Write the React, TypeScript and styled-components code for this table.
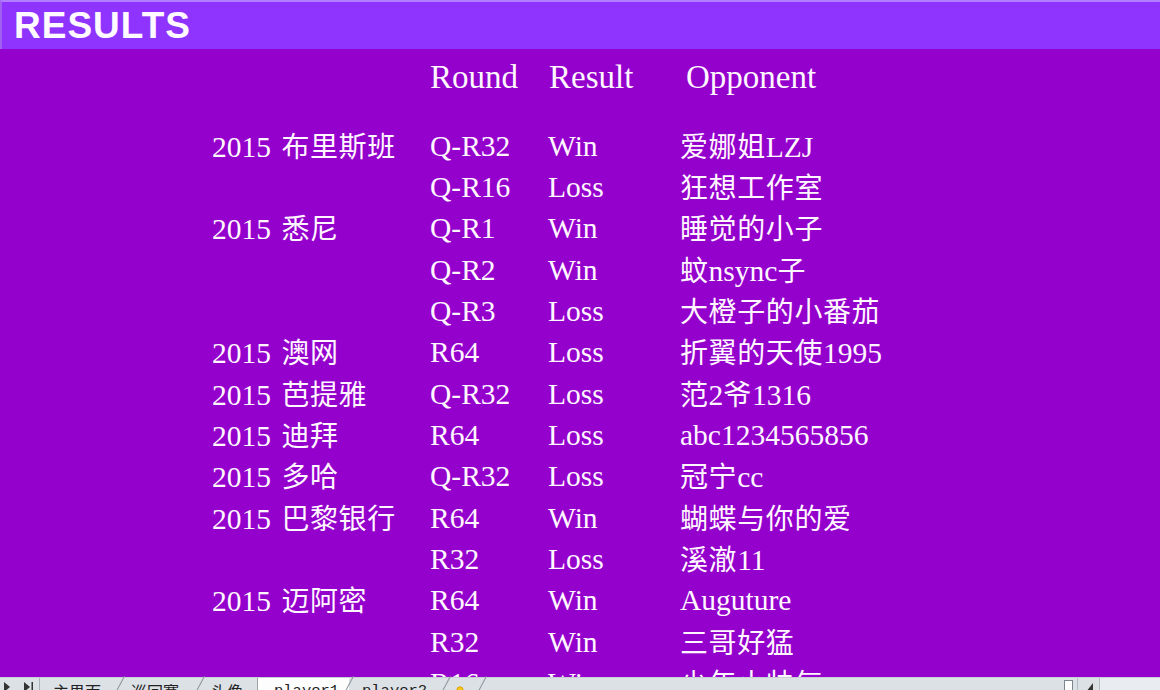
import React from "react";
import styled, { createGlobalStyle } from "styled-components";

const GlobalStyle = createGlobalStyle`
  html, body { margin: 0; padding: 0; overflow: hidden; background: #9400cc; }
  * { box-sizing: border-box; }
`;

const Page = styled.div`
  width: 1160px;
  height: 690px;
  overflow: hidden;
  display: flex;
  flex-direction: column;
`;

const TitleBar = styled.div`
  height: 49px;
  flex: none;
  background: #8f33ff;
  border-top: 2px solid #b27dff;
  border-left: 2px solid #a060f0;
  padding-left: 12px;
  display: flex;
  align-items: center;
  font-family: "Liberation Sans", Arial, sans-serif;
  font-weight: bold;
  font-size: 37px;
  letter-spacing: 1px;
  color: #fffaff;
  line-height: 1;
`;

const Sheet = styled.div`
  height: 628px;
  flex: none;
  overflow: hidden;
  background: #9400cc;
  color: #fff6ff;
  font-family: "Liberation Serif", "Noto Sans CJK SC", serif;
`;

const HeaderRow = styled.div`
  display: grid;
  grid-template-columns: 430px 119px 137px 1fr;
  height: 56px;
  margin-bottom: 20px;
  align-items: center;
  font-size: 33px;
  line-height: 40px;
`;

const Row = styled.div`
  display: grid;
  grid-template-columns: 212px 218px 118px 132px 1fr;
  height: 41.33px;
  align-items: center;
  font-size: 29.5px;
  line-height: 36px;
  white-space: nowrap;
`;

const Cell = styled.div<{ $indent?: number }>`
  padding-left: ${(p) => p.$indent ?? 0}px;
`;

const CjkText = styled.span<{ $gap?: number }>`
  font-family: "Noto Sans CJK SC", sans-serif;
  font-size: 28px;
  letter-spacing: 0.6px;
  margin-left: ${(p) => p.$gap ?? 0}px;
`;

const TabBar = styled.div`
  height: 24px;
  flex: none;
  display: flex;
  align-items: stretch;
  background: #dce1e6;
  border-top: 1px solid #c8ced4;
  position: relative;
`;

const NavBox = styled.div`
  width: 40px;
  display: flex;
  align-items: flex-start;
  padding: 4px 0 0 3px;
  gap: 12px;
  border-right: 1px solid #aab2ba;
`;

const Tabs = styled.div`
  display: flex;
  align-items: stretch;
  padding-left: 8px;
`;

const Tab = styled.div<{ $active?: boolean; $mono?: boolean; $w: number; $pad?: number }>`
  position: relative;
  width: ${(p) => p.$w}px;
  padding-left: ${(p) => p.$pad ?? 5}px;
  padding-top: 3px;
  background: ${(p) => (p.$active ? "#fdfdfd" : "transparent")};
  border-left: ${(p) => (p.$active ? "1px solid #9aa2aa" : "none")};
  font-family: ${(p) =>
    p.$mono ? '"Liberation Mono", monospace' : '"Noto Sans CJK SC", sans-serif'};
  font-size: ${(p) => (p.$mono ? "15.5px" : "16px")};
  color: #222;
  line-height: 20px;
  white-space: nowrap;
`;

const Slant = styled.span`
  width: 6px;
  flex: none;
  position: relative;
  &::before {
    content: "";
    position: absolute;
    left: 4px;
    top: -2px;
    width: 1px;
    height: 30px;
    background: #8c949c;
    transform: rotate(28deg);
    transform-origin: top left;
  }
`;

const RightTools = styled.div`
  margin-left: auto;
  display: flex;
  align-items: stretch;
`;

const Splitter = styled.div`
  width: 9px;
  margin-top: 2px;
  border: 1px solid #7c848c;
  background: #fff;
  border-bottom: none;
  margin-right: 4px;
`;

const ScrollBtn = styled.div`
  width: 23px;
  border-left: 1px solid #b4bcc4;
  border-right: 1px solid #b4bcc4;
  display: flex;
  justify-content: center;
  padding-top: 4px;
`;

const Track = styled.div`
  width: 60px;
  background: #e9edf1;
`;

const Tri = () => (
  <svg width="8" height="10" viewBox="0 0 8 10">
    <path d="M1 0 L7 5 L1 10 Z" fill="#333" />
  </svg>
);

const TriEnd = () => (
  <svg width="11" height="10" viewBox="0 0 11 10">
    <path d="M1 0 L7 5 L1 10 Z" fill="#333" />
    <rect x="8.5" y="0" width="1.5" height="10" fill="#333" />
  </svg>
);

const InsertIcon = () => (
  <svg width="18" height="12" viewBox="0 0 18 12">
    <rect x="3" y="5" width="13" height="9" fill="#fff" stroke="#6a7ea0" />
    <circle cx="6" cy="4" r="3.2" fill="#f5c518" stroke="#d69a00" strokeWidth="0.8" />
  </svg>
);

const LeftTri = () => (
  <svg width="10" height="10" viewBox="0 0 10 10">
    <path d="M9 1 L9 10 L2 10 Z" fill="#333" />
  </svg>
);

type R = { ev?: string; ec?: string; round: string; result: string; opp: React.ReactNode };

const rows: R[] = [
  { ev: "2015 ", ec: "布里斯班", round: "Q-R32", result: "Win", opp: <><CjkText>爱娜姐</CjkText>LZJ</> },
  { round: "Q-R16", result: "Loss", opp: <CjkText>狂想工作室</CjkText> },
  { ev: "2015 ", ec: "悉尼", round: "Q-R1", result: "Win", opp: <CjkText>睡觉的小子</CjkText> },
  { round: "Q-R2", result: "Win", opp: <><CjkText>蚊</CjkText>nsync<CjkText>子</CjkText></> },
  { round: "Q-R3", result: "Loss", opp: <CjkText>大橙子的小番茄</CjkText> },
  { ev: "2015 ", ec: "澳网", round: "R64", result: "Loss", opp: <><CjkText>折翼的天使</CjkText>1995</> },
  { ev: "2015 ", ec: "芭提雅", round: "Q-R32", result: "Loss", opp: <><CjkText>范</CjkText>2<CjkText>爷</CjkText>1316</> },
  { ev: "2015 ", ec: "迪拜", round: "R64", result: "Loss", opp: "abc1234565856" },
  { ev: "2015 ", ec: "多哈", round: "Q-R32", result: "Loss", opp: <><CjkText>冠宁</CjkText>cc</> },
  { ev: "2015 ", ec: "巴黎银行", round: "R64", result: "Win", opp: <CjkText>蝴蝶与你的爱</CjkText> },
  { round: "R32", result: "Loss", opp: <><CjkText>溪澈</CjkText>11</> },
  { ev: "2015 ", ec: "迈阿密", round: "R64", result: "Win", opp: "Auguture" },
  { round: "R32", result: "Win", opp: <CjkText>三哥好猛</CjkText> },
  { round: "R16", result: "Win", opp: <CjkText>少年小帅气</CjkText> },
];

export default function App() {
  return (
    <>
      <GlobalStyle />
      <Page>
        <TitleBar>RESULTS</TitleBar>
        <Sheet>
          <HeaderRow>
            <Cell />
            <Cell>Round</Cell>
            <Cell>Result</Cell>
            <Cell>Opponent</Cell>
          </HeaderRow>
          {rows.map((r, i) => (
            <Row key={i}>
              <Cell />
              <Cell>
                {r.ev}
                {r.ec && <CjkText $gap={3}>{r.ec}</CjkText>}
              </Cell>
              <Cell>{r.round}</Cell>
              <Cell>{r.result}</Cell>
              <Cell>{r.opp}</Cell>
            </Row>
          ))}
        </Sheet>
        <TabBar>
          <NavBox>
            <Tri />
            <TriEnd />
          </NavBox>
          <Tabs>
            <Tab $w={72}>主界面</Tab>
            <Slant />
            <Tab $w={74}>巡回赛</Tab>
            <Slant />
            <Tab $w={51}>头像</Tab>
            <Tab $active $mono $w={92} $pad={16}>player1</Tab>
            <Slant />
            <Tab $mono $w={91} $pad={7}>player2</Tab>
            <Slant />
            <Tab $w={30} $pad={2}><InsertIcon /></Tab>
            <Slant />
          </Tabs>
          <RightTools>
            <Splitter />
            <ScrollBtn><LeftTri /></ScrollBtn>
            <Track />
          </RightTools>
        </TabBar>
      </Page>
    </>
  );
}
